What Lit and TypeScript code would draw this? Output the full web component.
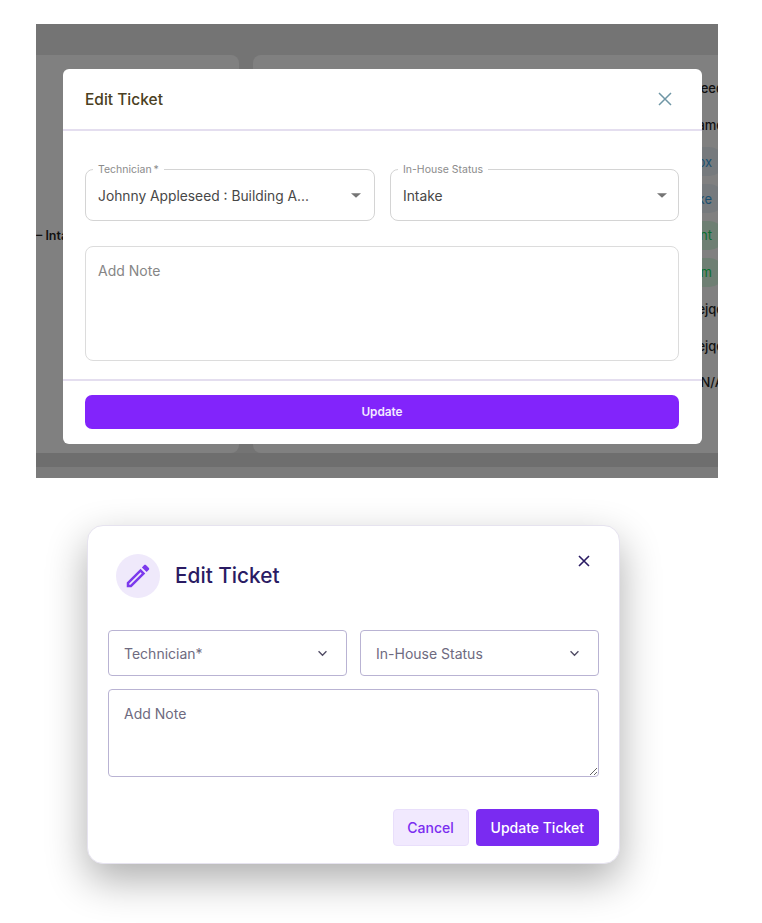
import { LitElement, html, css } from "lit";
import { customElement } from "lit/decorators.js";

const caret = html`<svg class="caret" viewBox="0 0 11 5" width="10" height="5"><path d="M0 0h11L5.5 5z" fill="#757575"/></svg>`;
const chevron = html`<svg class="chev" viewBox="0 0 12 8" width="11" height="7"><path d="M1.5 1.5 6 6l4.5-4.5" fill="none" stroke="#4f4a63" stroke-width="1.5"/></svg>`;

@customElement("app-root")
export class AppRoot extends LitElement {
  static styles = css`
    :host { display: block; width: 762px; height: 923px; background: #fff; overflow: hidden;
      font-family: "Inter", "Liberation Sans", sans-serif; padding: 24px 0 0 36px; box-sizing: border-box; }
    * { box-sizing: border-box; }
    .shot { position: relative; width: 682px; height: 454px; overflow: hidden; background: #747474;
      display: grid; grid-template-rows: 31px 398px 14px 11px; }
    .middle { display: grid; grid-template-columns: 203px 465px; column-gap: 14px; }
    .panel { background: #808080; }
    .panel.l { border-radius: 0 8px 8px 0; display: flex; flex-direction: column; justify-content: center; padding-bottom: 38px; white-space: nowrap; font-size: 12.5px; font-weight: 600; color: #111; }
    .panel.r { border-radius: 8px 0 0 8px; display: flex; flex-direction: column; align-items: flex-end; padding: 15px 0 0; margin-right: -6px; font-size: 13px; font-weight: 500; color: #111; }
    .row { height: 36.75px; display: flex; align-items: center; white-space: nowrap; }
    .pill { height: 29px; padding: 0 12px 0 14px; margin-right: 0; border-radius: 15px; display: flex; align-items: center; font-weight: 400; }
    .blue { color: #1b5070; background: #767a7d; }
    .green { color: #0a6f2e; background: #6e7f73; }
    .band2 { background: #6e6e6e; }
    .band3 { background: #7b7b7b; }

    .modal { position: absolute; left: 26.5px; top: 45px; width: 639.5px; height: 375px; background: #fff; border-radius: 6px; display: flex; flex-direction: column; }
    .mhead { height: 62px; flex: none; display: flex; align-items: center; justify-content: space-between; padding: 0 30.5px 0 22.5px; border-bottom: 2px solid #e4deef; }
    .mtitle { font-size: 15.5px; font-weight: 500; color: #4b3f22; }
    .mbody { flex: none; padding: 38px 22.5px 18px; display: flex; flex-direction: column; gap: 25px; border-bottom: 2px solid #e4deef; }
    .mrow { display: grid; grid-template-columns: 290px 289px; column-gap: 15px; }
    .field { position: relative; height: 52px; border: 1px solid #d4d4d4; border-radius: 8px; display: flex; align-items: center; justify-content: space-between; padding: 2px 13px 0 12px; font-size: 13.8px; color: #474747; }
    .field .legend { position: absolute; left: 7px; top: -6px; padding: 0 5px; background: #fff; font-size: 10.5px; line-height: 12px; color: #8b8b8b; }
    .field .caret { margin-right: 0; margin-top: -2px; }
    .field.tight .caret { margin-right: -2px; }
    textarea { display: block; font-family: inherit; background: #fff; outline: none; }
    .mnote { width: 594px; height: 114.5px; border: 1px solid #dcdcdc; border-radius: 8px; padding: 15px 12px; font-size: 14px; resize: none; }
    .mnote::placeholder { color: #868686; opacity: 1; }
    .mfoot { padding: 14px 22.5px 15px; }
    .mbtn { width: 594px; height: 34.5px; background: #8224fb; color: #f3eaff; border: 0; border-radius: 7px; font: 600 11.8px "Inter", sans-serif; display: block; }

    .card { position: relative; margin: 47px 0 0 51px; width: 533px; height: 339px; background: #fff; border: 1px solid #e6e3ef; border-radius: 16px;
      box-shadow: 0 16px 40px rgba(0,0,0,.32); padding: 28px 20px 17px; display: flex; flex-direction: column; }
    .chead { display: flex; align-items: center; gap: 15px; padding-left: 8px; margin-bottom: 32px; }
    .circle { width: 44px; height: 44px; border-radius: 50%; background: #efe9fb; display: flex; align-items: center; justify-content: center; }
    .ctitle { font-size: 20.8px; font-weight: 500; color: #2a1b63; margin-top: -2px; }
    .close { position: absolute; right: 28px; top: 28px; display: block; }
    .crow { display: grid; grid-template-columns: 239px 239px; column-gap: 13px; margin-bottom: 13px; }
    .sel { height: 46px; border: 1px solid #b9b3d3; border-radius: 4px; display: flex; align-items: center; justify-content: space-between; padding: 0 18px 0 15px; font-size: 14px; color: #6e6a80; }
    .cnote { width: 491px; height: 88px; border: 1px solid #b9b3d3; border-radius: 4px; padding: 15px; font-size: 14px; margin-bottom: 32px; }
    .cnote::placeholder { color: #6e6a80; opacity: 1; }
    .actions { display: flex; justify-content: flex-end; gap: 7.5px; padding-right: 0.5px; }
    .btn { height: 37px; border-radius: 4px; font: 500 14px "Inter", sans-serif; display: flex; align-items: center; justify-content: center; }
    .cancel { width: 76px; background: #f1e9fe; border: 1px solid #e9dffb; color: #7a2df0; }
    .update { width: 122.5px; background: #7a2bf1; border: 0; color: #fff; }
  `;

  render() {
    return html`
      <div class="shot">
        <div></div>
        <div class="middle">
          <div class="panel l"><span>– Intake</span></div>
          <div class="panel r">
            <div class="row">Appleseed</div>
            <div class="row">Username</div>
            <div class="row"><span class="pill blue">Inbox</span></div>
            <div class="row"><span class="pill blue">Intake</span></div>
            <div class="row"><span class="pill green">Urgent</span></div>
            <div class="row"><span class="pill green">Medium</span></div>
            <div class="row">ejqe</div>
            <div class="row">ejqe</div>
            <div class="row">N/A</div>
          </div>
        </div>
        <div class="band2"></div>
        <div class="band3"></div>
        <div class="modal">
          <div class="mhead">
            <span class="mtitle">Edit Ticket</span>
            <svg width="14" height="14" viewBox="0 0 14 14"><path d="M1 1l12 12M13 1 1 13" stroke="#6f96a5" stroke-width="1.5" fill="none"/></svg>
          </div>
          <div class="mbody">
            <div class="mrow">
              <div class="field"><span class="legend">Technician\u2009*</span><span>Johnny Appleseed : Building A...</span>${caret}</div>
              <div class="field tight"><span class="legend">In-House Status</span><span>Intake</span>${caret}</div>
            </div>
            <textarea class="mnote" placeholder="Add Note"></textarea>
          </div>
          <div class="mfoot"><button class="mbtn">Update</button></div>
        </div>
      </div>
      <div class="card">
        <svg class="close" width="14" height="14" viewBox="0 0 14 14"><path d="M2 2l10 10M12 2 2 12" stroke="#2a1b63" stroke-width="1.6" fill="none"/></svg>
        <div class="chead">
          <div class="circle">
            <svg width="30" height="30" viewBox="0 0 24 24"><path fill="#7c3aed" d="M3 17.25V21h3.75L17.81 9.94l-3.75-3.75L3 17.25zM5.92 19H5v-.92l9.06-9.06.92.92L5.92 19zM20.71 5.63l-2.34-2.34c-.2-.2-.45-.29-.71-.29s-.51.1-.7.29l-1.83 1.83 3.75 3.75 1.83-1.83c.39-.39.39-1.02 0-1.41z"/></svg>
          </div>
          <span class="ctitle">Edit Ticket</span>
        </div>
        <div class="crow">
          <div class="sel"><span>Technician*</span>${chevron}</div>
          <div class="sel"><span>In-House Status</span>${chevron}</div>
        </div>
        <textarea class="cnote" placeholder="Add Note"></textarea>
        <div class="actions">
          <button class="btn cancel">Cancel</button>
          <button class="btn update">Update Ticket</button>
        </div>
      </div>
    `;
  }
}
